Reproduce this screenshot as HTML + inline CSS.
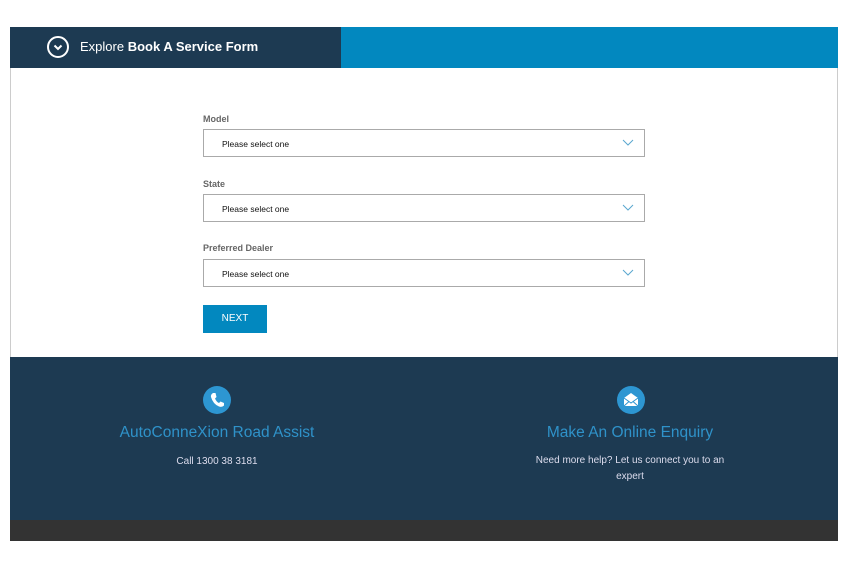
<!DOCTYPE html>
<html><head><meta charset="utf-8"><style>
*{margin:0;padding:0;box-sizing:border-box}
body{width:852px;height:568px;background:#fff;position:relative;font-family:"Liberation Sans",sans-serif;overflow:hidden}
.wrap{position:absolute;left:10px;top:27px;width:828px}
.hdr{height:41px;background:#0288bf;position:relative}
.hdr .d{position:absolute;left:0;top:0;width:331px;height:41px;background:#1d3a52}
.hdr .c{position:absolute;left:37px;top:9px;width:22px;height:22px;border:2px solid #fff;border-radius:50%}
.hdr .t{position:absolute;left:70px;top:12px;color:#fff;font-size:13px}
.body{height:289px;border-left:1px solid #ccc;border-right:1px solid #ccc;position:relative}
.lbl{position:absolute;left:192px;font-size:9px;font-weight:bold;color:#666}
.sel{position:absolute;left:192px;width:442px;height:28px;border:1px solid #aaa;font-size:8.5px;color:#111;padding:9px 0 0 18px}
.sel svg{position:absolute;right:10px;top:9px}
.btn{position:absolute;left:192px;top:237px;width:64px;height:28px;background:#0288bf;color:#fff;font-size:10px;text-align:center;line-height:28px}
.ft{height:163px;background:#1d3a52;position:relative}
.bot{height:21px;background:#333}
.ic{position:absolute;top:29px;width:28px;height:28px;border-radius:50%;background:#2d96d2}
.tt{position:absolute;top:67px;width:300px;text-align:center;color:#2f92c9;font-size:15.5px}
.tx{position:absolute;width:300px;text-align:center;color:#dde;font-size:10px;line-height:16px}
</style></head><body>
<div class="wrap">
<div class="hdr"><div class="d"></div><div class="c"><svg width="18" height="18" viewBox="0 0 18 18" style="position:absolute;left:0;top:0"><path d="M5.5 7.5 L9 11 L12.5 7.5" stroke="#fff" stroke-width="2" fill="none"/></svg></div><div class="t">Explore <b>Book A Service Form</b></div></div>
<div class="body">
<div class="lbl" style="top:46px">Model</div>
<div class="sel" style="top:61px">Please select one<svg width="12" height="8"><path d="M1 1 L6 6 L11 1" stroke="#5aa7cf" fill="none"/></svg></div>
<div class="lbl" style="top:111px">State</div>
<div class="sel" style="top:126px">Please select one<svg width="12" height="8"><path d="M1 1 L6 6 L11 1" stroke="#5aa7cf" fill="none"/></svg></div>
<div class="lbl" style="top:175px">Preferred Dealer</div>
<div class="sel" style="top:191px">Please select one<svg width="12" height="8"><path d="M1 1 L6 6 L11 1" stroke="#5aa7cf" fill="none"/></svg></div>
<div class="btn">NEXT</div>
</div>
<div class="ft">
<div class="ic" style="left:193px"><svg width="28" height="28" viewBox="0 0 28 28"><path d="M10 7 L12.5 7 L13.5 11 L12 12.5 Q13.5 16 16 17 L17.5 15.5 L21 17 L21 19.5 Q19 21.5 16 20.5 Q10 18 8 11 Q7.5 8.5 10 7Z" fill="#fff"/></svg></div>
<div class="tt" style="left:57px">AutoConneXion Road Assist</div>
<div class="tx" style="left:57px;top:97px">Call 1300 38 3181</div>
<div class="ic" style="left:607px"><svg width="28" height="28" viewBox="0 0 28 28"><path d="M7 12 L14 7 L21 12 L21 20 L7 20Z" fill="#fff"/><path d="M7 12 L14 17 L21 12 M7 20 L12 15.5 M21 20 L16 15.5" stroke="#2d96d2" fill="none"/></svg></div>
<div class="tt" style="left:470px">Make An Online Enquiry</div>
<div class="tx" style="left:470px;top:96px;padding:0 45px 0 45px">Need more help? Let us connect you to an expert</div>
</div>
<div class="bot"></div>
</div>
</body></html>
